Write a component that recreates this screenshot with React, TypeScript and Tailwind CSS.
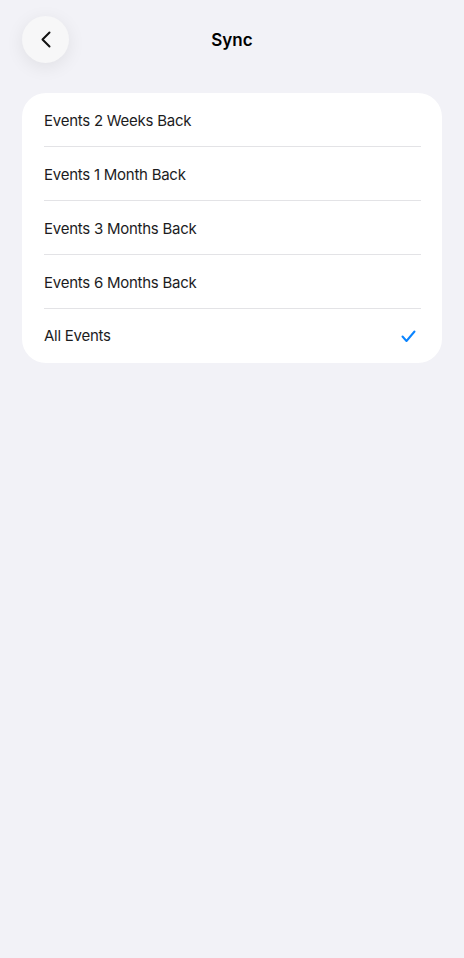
import { useState } from 'react'

const options = [
  'Events 2 Weeks Back',
  'Events 1 Month Back',
  'Events 3 Months Back',
  'Events 6 Months Back',
  'All Events',
]

export default function App() {
  const [selected, setSelected] = useState('All Events')

  return (
    <div className="min-h-[958px] w-full bg-[#f2f2f7] font-['Inter',sans-serif] text-black">
      <div className="relative flex h-[80px] items-center justify-center">
        <button className="absolute left-[22px] top-[16px] flex h-[47px] w-[47px] items-center justify-center rounded-full bg-[#f7f7f8] shadow-[0_4px_18px_rgba(0,0,0,0.08)]">
          <svg width="12" height="17" viewBox="0 0 12 17" fill="none">
            <path d="M9.5 1.5L2.5 8.5L9.5 15.5" stroke="#111" strokeWidth="2" strokeLinecap="round" strokeLinejoin="round" />
          </svg>
        </button>
        <h1 className="pt-[1px] text-[17px] font-semibold">Sync</h1>
      </div>

      <div className="mx-[22px] mt-[13px] overflow-hidden rounded-[24px] bg-white pl-[22px]">
        {options.map((opt, i) => (
          <div
            key={opt}
            onClick={() => setSelected(opt)}
            className={`flex h-[54px] items-center justify-between pr-[26px] text-[15px] tracking-[-0.25px] text-[#1c1c1e] ${
              i < options.length - 1 ? 'mr-[21px] border-b border-[#e3e3e6] pr-[5px]' : ''
            }`}
          >
            <span className={i < options.length - 1 ? 'pt-[3px]' : 'pt-[1px]'}>{opt}</span>
            {selected === opt && (
              <svg width="15" height="13" viewBox="0 0 15 13" fill="none">
                <path d="M1.5 6.5L5.5 11L13.5 1.5" stroke="#0a84ff" strokeWidth="2" strokeLinecap="round" strokeLinejoin="round" />
              </svg>
            )}
          </div>
        ))}
      </div>
    </div>
  )
}
